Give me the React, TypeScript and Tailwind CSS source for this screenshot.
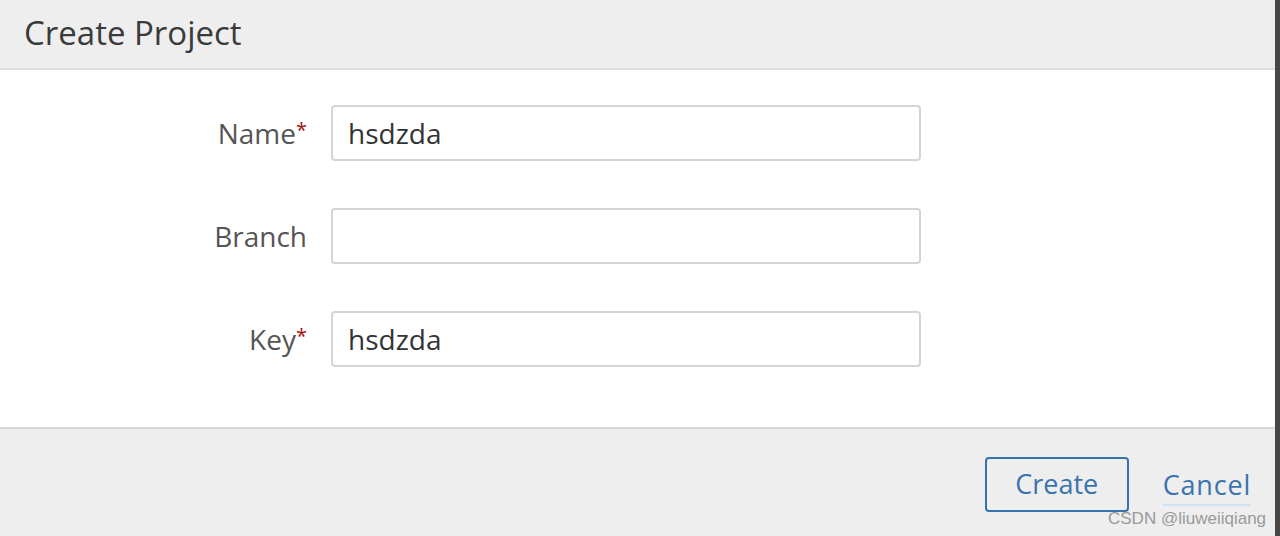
import React from "react";

const font = { fontFamily: '"Open Sans", "Noto Sans", sans-serif' };

const Field = ({
  label,
  value,
  required = false,
}: {
  label: string;
  value: string;
  required?: boolean;
}) => (
  <div className="flex items-center">
    <label className="w-[307px] text-right text-[28px] text-[#555555] leading-none flex justify-end items-start">
      <span>{label}</span>
      {required && (
        <span className="text-[#a30d0d] text-[20px] leading-none mt-[1px]">*</span>
      )}
    </label>
    <div className="ml-[24px] w-[590px] h-[56px] rounded-[4px] border-2 border-[#d4d4d4] bg-white flex items-center px-[15px] text-[28px] text-[#333333]">
      {value}
    </div>
  </div>
);

export default function App() {
  return (
    <div className="relative w-[1280px] h-[536px] flex overflow-hidden" style={font}>
      <div className="flex-1 flex flex-col">
        {/* Шапка */}
        <div className="h-[70px] bg-[#eeeeee] border-b-2 border-[#dddddd] flex items-center pl-[24px]">
          <h2 className="text-[33px] text-[#3a3a3a] leading-none -mt-[3px]">Create Project</h2>
        </div>

        {/* Форма */}
        <div className="h-[357px] bg-white pt-[35px] flex flex-col gap-[47px]">
          <Field label="Name" value="hsdzda" required />
          <Field label="Branch" value="" />
          <Field label="Key" value="hsdzda" required />
        </div>

        {/* Кнопки */}
        <div className="flex-1 bg-[#eeeeee] border-t-2 border-[#d8d8d8] flex items-start justify-end pt-[28px] pr-[24px]">
          <button className="w-[144px] h-[55px] rounded-[4px] border-2 border-[#3572b0] text-[27px] text-[#3b73af] bg-transparent">
            Create
          </button>
          <a className="ml-[34px] mt-[9px] text-[27px] tracking-[0.8px] text-[#3b73af] border-b-2 border-[#cfe2f3] leading-[38px]">
            Cancel
          </a>
        </div>
      </div>
      <div className="w-[5px] bg-[#474747]" />

      <span
        className="absolute left-[1108px] top-[506px] text-[17px] text-[#9a9a9a]"
        style={{ fontFamily: '"Liberation Sans", Arial, sans-serif' }}
      >
        CSDN @liuweiiqiang
      </span>
    </div>
  );
}
